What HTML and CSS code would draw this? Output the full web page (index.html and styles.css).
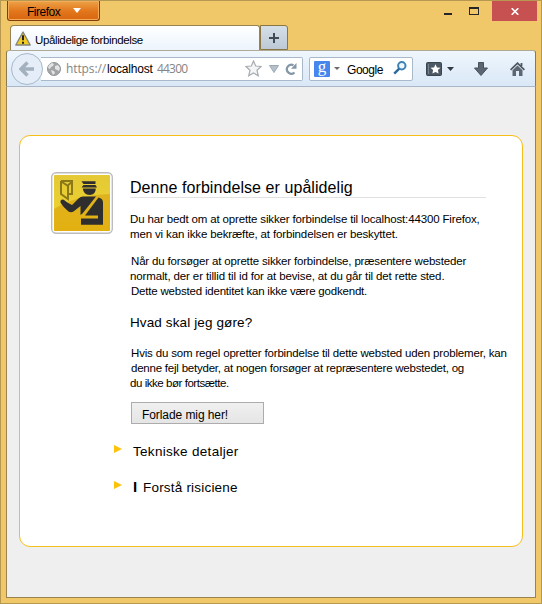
FILE: index.html
```html
<!DOCTYPE html>
<html lang="da">
<head>
<meta charset="utf-8">
<title>Upålidelige forbindelse</title>
<link rel="stylesheet" href="styles.css">
</head>
<body>
<div class="window">
  <header class="titlebar">
    <div class="menu-button"><span>Firefox</span><svg width="8" height="5" viewBox="0 0 8 5"><path d="M0 0h8L4 5z" fill="#fff"/></svg></div>
    <div class="controls">
      <svg class="min" width="8" height="2"><path d="M0 0h8v2H0z" fill="#262626"/></svg>
      <svg class="max" width="10" height="8" viewBox="0 0 10 8"><path d="M0 0h10v8H0zM1 2v5h8V2z" fill="#262626" fill-rule="evenodd"/></svg>
      <div class="close"><svg width="8" height="7" viewBox="0 0 8 7"><path d="M.7.2l6.600 6.600M7.300.2L.7 6.800" stroke="#fff" stroke-width="1.600"/></svg></div>
    </div>
  </header>
  <nav class="tabs">
    <div class="tab">
      <svg width="16" height="15" viewBox="0 0 16 15"><path d="M8 1L15.200 14H.8z" fill="#f2cc22" stroke="#84847c" stroke-width="1.400" stroke-linejoin="round"/><path d="M8 4.300v5M8 10.700v2" stroke="#222" stroke-width="2"/></svg>
      <span>Upålidelige forbindelse</span>
    </div>
    <div class="new-tab"><svg width="10" height="10"><path d="M5 0v10M0 5h10" stroke="#404b58" stroke-width="2"/></svg></div>
  </nav>
  <div class="toolbar">
    <div class="back"><svg width="16" height="16" viewBox="0 0 16 16"><path d="M8.500 1.500L2 8l6.500 6.500M2.500 8H15" fill="none" stroke="#a3b0be" stroke-width="3.400"/></svg></div>
    <div class="address">
      <svg class="globe" width="14" height="14" viewBox="0 0 14 14"><circle cx="7" cy="7" r="6.500" fill="#a2a4a6" stroke="#929496"/><path d="M2 3l3-2 2 1-1 2-2 1-1 2-2-1zM8 4l3-1 2 3-1 3-2-1-2-1zM4 8l3 1 1 2-2 2-1-2z" fill="#e2e4e5"/></svg>
      <span class="url"><span class="scheme">https://</span><span class="host">localhost</span><span class="port">44300</span></span>
      <svg class="star" width="17" height="17" viewBox="0 0 17 17"><path d="M8.500 1l2.200 5 5.300.5-4 3.700 1.300 5.600-4.800-2.900-4.800 2.900L5 10.200 1 6.500 6.300 6z" fill="#f4f5f6" stroke="#a9adb1" stroke-width="1.200"/></svg>
      <svg class="drop" width="10" height="8" viewBox="0 0 10 8"><path d="M.5.5h9L5 7.500z" fill="#b5c0cb" stroke="#9ba9b7"/></svg>
      <svg class="reload" width="12" height="12" viewBox="0 0 12 12"><path d="M9.500 9.500A4.500 4.500 0 1 1 8.500 2.200" fill="none" stroke="#8496a7" stroke-width="2.200"/><path d="M11.500 0v5.800H6z" fill="#8496a7"/></svg>
    </div>
    <div class="search">
      <div class="g-logo">g</div>
      <svg class="g-drop" width="6" height="3" viewBox="0 0 6 3"><path d="M0 0h6L3 3z" fill="#6a6a6a"/></svg>
      <span>Google</span>
      <svg class="lens" width="14" height="14" viewBox="0 0 14 14"><circle cx="8.800" cy="4.800" r="3.700" fill="#eef7fc" stroke="#3f82b6" stroke-width="2"/><path d="M6.200 7.700L1.200 12.700" stroke="#2b689c" stroke-width="2.400"/></svg>
    </div>
    <svg class="bookmarks" width="16" height="14" viewBox="0 0 16 14"><rect x=".5" y=".5" width="15" height="13" rx="1" fill="#4d5865" stroke="#3a4552"/><path d="M2.500 2v10" stroke="#778390"/><path d="M9.500 2.300l1.500 3.100 3.500.4-2.600 2.300.7 3.500-3.100-1.700-3.100 1.700.7-3.500-2.600-2.300 3.500-.4z" fill="#fff"/></svg>
    <svg class="book-drop" width="7" height="4" viewBox="0 0 7 4"><path d="M0 0h7L3.500 4z" fill="#303944"/></svg>
    <svg class="download" width="14" height="14" viewBox="0 0 14 14"><path d="M4.500.5h5V6h4L7 13.500.5 6h4z" fill="#5c6672" stroke="#46515d"/></svg>
    <svg class="home" width="15" height="14" viewBox="0 0 15 14"><path d="M.6 7.800L7.500 1.200l6.900 6.600M11.500 1v3" fill="none" stroke="#4d5864" stroke-width="1.800"/><path d="M2.500 8.200l5-4.700 5 4.700V14H9V9H6v5H2.500z" fill="#5d6773"/></svg>
  </div>
  <main class="viewport">
    <section class="card">
      <svg class="officer" width="62" height="62" viewBox="0 0 62 62">
        <defs><linearGradient id="gold" x2="0" y2="1"><stop stop-color="#e4c936"/><stop offset="1" stop-color="#efd52c"/></linearGradient><linearGradient id="amber" x2="0" y2="1"><stop stop-color="#dfb31f"/><stop offset="1" stop-color="#e3b010"/></linearGradient></defs>
        <rect x=".7" y=".7" width="60.600" height="60.600" rx="4.500" fill="#fff" stroke="#bcbcbc" stroke-width="1.400"/>
        <rect x="3" y="3" width="56" height="56" rx="1" fill="url(#gold)"/>
        <path d="M3 37Q25 23 59 22V58q0 1-1 1H4q-1 0-1-1z" fill="url(#amber)"/>
        <path d="M10 9h11v13h-5M10 9v13l7 5V14l-6-4M16 14l5-4" fill="none" stroke="#8b7919" stroke-width="2"/>
        <g fill="#2e2e2e"><path d="M30.500 9.300h14V12h-12zM32.500 13h12l1.500 2.500H30.500zM31.800 16.500h13q0 6.200-6.300 6.400-6-.2-6.700-6.400z"/><path d="M10 28q2-1.500 4 .8 3.500 3 7 4.200l6.500-6.500q2-2 4.500-2h13L31.500 41.500 29.500 43v-9l-7 5.500q-2.500 1.500-5 0Q12 35 9.700 31q-.7-2 .3-3z"/><path d="M47.500 25.500q4.500 1 4.500 5v22.200H30v-6.200h17v-3H34z"/></g>
      </svg>
      <div class="message">
        <h1>Denne forbindelse er upålidelig</h1>
        <p class="intro"><span class="a1">Du har bedt om at oprette sikker forbindelse til localhost:44300 Firefox,</span><br><span class="a2">men vi kan ikke bekræfte, at forbindelsen er beskyttet.</span></p>
        <p class="reason"><span class="b1">Når du forsøger at oprette sikker forbindelse, præsentere websteder</span><br><span class="b2">normalt, der er tillid til id for at bevise, at du går til det rette sted.</span><br><span class="b3">Dette websted identitet kan ikke være godkendt.</span></p>
        <h2>Hvad skal jeg gøre?</h2>
        <p class="advice"><span class="c1">Hvis du som regel opretter forbindelse til dette websted uden problemer, kan</span><br><span class="c2">denne fejl betyder, at nogen forsøger at repræsentere webstedet, og</span><br><span class="c3">du ikke bør fortsætte.</span></p>
        <div class="leave"><span>Forlade mig her!</span></div>
        <div class="expander technical"><svg width="8" height="8"><path d="M0 0l8 4-8 4z" fill="#ffc20a"/></svg><span>Tekniske detaljer</span></div>
        <div class="expander risks"><svg width="8" height="8"><path d="M0 0l8 4-8 4z" fill="#ffc20a"/></svg><b>I</b><span>Forstå risiciene</span></div>
      </div>
    </section>
  </main>
</div>
</body>
</html>
```
FILE: styles.css
```css
* { box-sizing: border-box; }
body { margin: 0; font-family: "Liberation Sans", Arial, sans-serif; color: #000; }
svg { display: block; flex: none; }
span { white-space: nowrap; }
.window { width: 542px; height: 604px; background: #f0c869; border: 1px solid #b79850; padding: 0 5px; overflow: hidden; }
.titlebar { height: 24px; display: flex; justify-content: space-between; }
.menu-button { width: 93px; height: 20px; margin-left: 1px; display: flex; align-items: center; background: linear-gradient(#eda249, #e2761b 55%, #d96510); border: 1px solid #813c09; border-top: 0; border-radius: 0 0 3px 3px; box-shadow: inset 0 0 0 1px #f4ab5a; padding: 2px 0 0 19px; font-size: 12px; letter-spacing: -.5px; }
.menu-button span { width: 34px; }
.menu-button svg { margin: -3px 0 0 12px; }
.controls { display: flex; }
.min { margin: 12px 17px 0 0; }
.max { margin: 6px 13px 0 0; }
.close { width: 45px; height: 20px; margin-right: -1px; background: #c75050; display: flex; align-items: center; justify-content: center; }
.tabs { height: 25px; display: flex; padding-left: 4px; }
.tab { width: 250px; height: 25px; display: flex; align-items: center; background: linear-gradient(#fff, #ecf4fd); border: 1px solid #988450; border-bottom: 0; border-radius: 4px 3px 0 0; padding-left: 4px; font-size: 11.5px; }
.tab span { margin: 4px 0 0 4px; letter-spacing: -.37px; }
.new-tab { width: 28px; height: 25px; display: flex; align-items: center; justify-content: center; background: linear-gradient(#d5dfe8, #bdc9d5); border: 1px solid #8b7543; border-radius: 0 3px 0 0; }
.toolbar { height: 37px; display: flex; align-items: center; background: linear-gradient(#eff6fd, #d9e7f6); border: 1px solid #8c7a4f; border-top-color: #afaa94; border-bottom-color: #a9b8c9; border-radius: 3px 3px 0 0; }
.back { width: 32px; height: 32px; margin-left: 4px; display: flex; align-items: center; justify-content: center; border: 1px solid #a8b8c9; border-radius: 50%; background: #e5eef8; position: relative; z-index: 1; }
.address { width: 262px; height: 24px; margin: 0 6px 0 -2px; border: 1px solid #a9b9ca; border-left: 0; border-radius: 0 2px 2px 0; background: #fff; display: flex; align-items: center; padding-left: 6px; }
.url { display: flex; align-items: baseline; width: 180px; margin: 0 5px 0 5px; font-size: 12px; }
.scheme { width: 41px; color: #858585; font-family: "Open Sans", sans-serif; letter-spacing: -.1px; }
.host { width: 50px; letter-spacing: -.2px; }
.port { color: #858585; font-family: "Open Sans", sans-serif; letter-spacing: -.8px; }
.star { margin-left: -6px; }
.drop { margin-left: 7px; }
.reload { margin-left: 6px; }
.search { width: 104px; height: 24px; border: 1px solid #a9b9ca; border-radius: 2px; background: #fff; display: flex; align-items: center; padding-left: 4px; }
.g-logo { width: 16px; height: 16px; border-radius: 1px; background: #4787ed; color: #fff; font: 17px/12px "Liberation Serif", serif; text-align: center; }
.g-drop { margin-left: 4px; }
.search span { width: 38px; margin: 3px 0 0 7px; font-size: 12px; letter-spacing: -.45px; }
.lens { margin: -2px 0 0 8px; }
.bookmarks { margin-left: 13px; }
.book-drop { margin-left: 5px; }
.download { margin-left: 20px; }
.home { margin-left: 22px; }
.viewport { height: 511px; background: #efefef; border: 1px solid #9a834d; border-top: 0; padding: 48px 11px 0 12px; }
.card { width: 504px; height: 412px; border: 1px solid #f6be18; border-radius: 11px; background: #fff; display: flex; padding: 36px 0 0 31px; }
.message { margin: 5px 0 0 17px; width: 380px; }
h1 { width: 356px; height: 21px; margin: 0 0 14px; border-bottom: 1px solid #e1e1e1; font-size: 16px; font-weight: 400; line-height: 22px; letter-spacing: .07px; white-space: nowrap; }
p { margin: 0; font-size: 11.5px; line-height: 15px; }
.reason { margin-top: 12px; }
.b1, .b3, .c1, .c2 { margin-left: 1px; }
.a1 { letter-spacing: -.15px; }
.a2 { letter-spacing: -.14px; }
.b1 { letter-spacing: -.17px; }
.b2 { letter-spacing: -.13px; }
.b3 { letter-spacing: -.2px; }
.c1 { letter-spacing: -.17px; }
.c2 { letter-spacing: -.22px; }
.c3 { letter-spacing: -.45px; }
h2 { margin: 15px 0 14px; font-size: 13.5px; font-weight: 400; line-height: 18px; letter-spacing: .12px; }
.leave { width: 133px; height: 22px; margin: 11px 0 0 1px; padding: 5px 0 0 10px; border: 1px solid #acacac; background: linear-gradient(#f0f0f0, #e5e5e5); font-size: 12px; line-height: 15px; }
.leave span { letter-spacing: -.08px; }
.expander { display: flex; height: 18px; margin: 19px 0 0 -16px; font-size: 13.5px; line-height: 18px; }
.expander svg { margin-top: 2px; }
.technical span { margin-left: 11px; letter-spacing: .3px; }
.risks { margin-top: 18px; }
.risks b { width: 6px; margin: -1px 4px 0 11px; font-size: 15px; }
.risks span { letter-spacing: .2px; }
```
